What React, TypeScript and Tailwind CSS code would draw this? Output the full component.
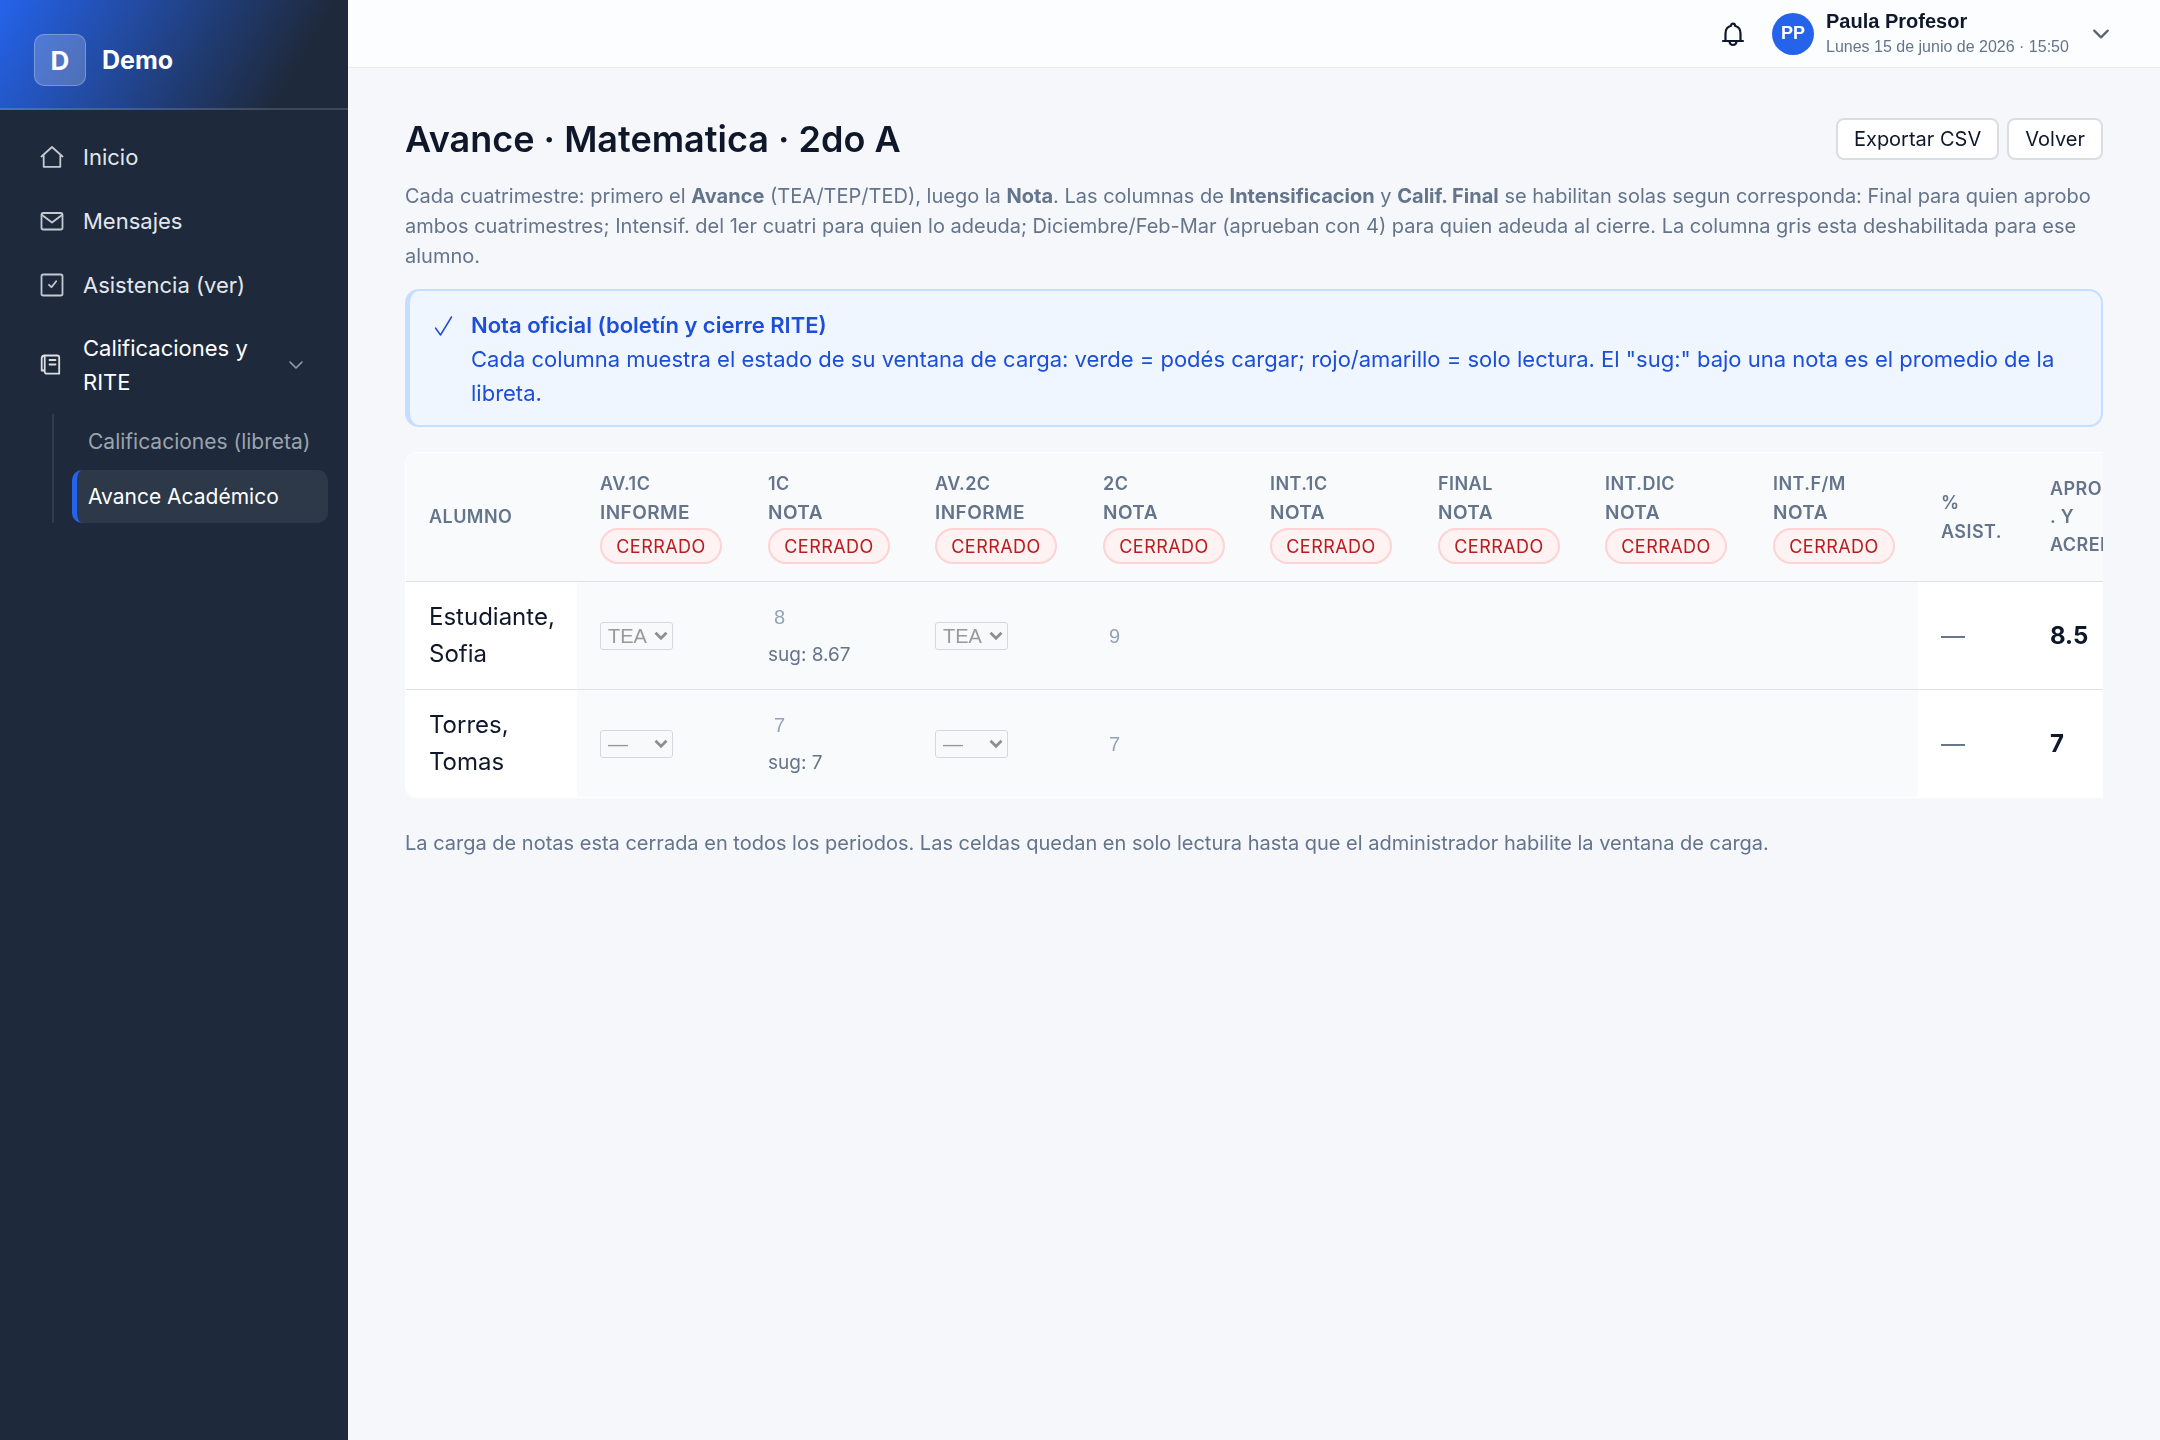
import type { ReactNode } from "react";

type Column = { top: string; bottom: string; width: string };

const gradeColumns: Column[] = [
  { top: "AV.1C", bottom: "INFORME", width: "w-[168px]" },
  { top: "1C", bottom: "NOTA", width: "w-[167px]" },
  { top: "AV.2C", bottom: "INFORME", width: "w-[168px]" },
  { top: "2C", bottom: "NOTA", width: "w-[167px]" },
  { top: "INT.1C", bottom: "NOTA", width: "w-[168px]" },
  { top: "FINAL", bottom: "NOTA", width: "w-[167px]" },
  { top: "INT.DIC", bottom: "NOTA", width: "w-[168px]" },
  { top: "INT.F/M", bottom: "NOTA", width: "w-[168px]" },
];

const students = [
  { last: "Estudiante,", first: "Sofia", av1: "TEA", n1: "8", sug: "8.67", av2: "TEA", n2: "9", final: "8.5" },
  { last: "Torres,", first: "Tomas", av1: "—", n1: "7", sug: "7", av2: "—", n2: "7", final: "7" },
];

function Icon({ children }: { children: ReactNode }) {
  return (
    <svg viewBox="0 0 28 28" className="size-7 shrink-0 opacity-85" fill="none" stroke="currentColor" strokeWidth="1.8" strokeLinecap="round" strokeLinejoin="round" aria-hidden="true">
      {children}
    </svg>
  );
}

function HomeIcon() {
  return (
    <Icon>
      <path d="M3.5 13.5 14 4l10.500 9.500M5.700 12v11.800h16.600V12" />
    </Icon>
  );
}

function MailIcon() {
  return (
    <Icon>
      <rect x="3.500" y="6" width="21" height="16.500" rx="1.800" />
      <path d="m4 8 10 7.500L24 8" />
    </Icon>
  );
}

function CheckBoxIcon() {
  return (
    <Icon>
      <rect x="3.500" y="3.500" width="21" height="21" rx="1.800" />
      <path d="m11 13.800 2.500 2.400 4.700-6" />
    </Icon>
  );
}

function BookIcon() {
  return (
    <Icon>
      <path d="M6.700 4.500h12.500a2 2 0 0 1 2 2v16.200H8.700a2 2 0 0 1-2-2zM6.700 4.500a3 3 0 0 0-3 2.500v12.500h2.500M11.500 9h6M11.500 13.500h6" />
    </Icon>
  );
}

function Chevron({ className }: { className: string }) {
  return (
    <svg viewBox="0 0 16 16" className={className} fill="none" stroke="currentColor" strokeLinecap="round" strokeLinejoin="round" aria-hidden="true">
      <path d="m2 5 6 6 6-6" />
    </svg>
  );
}

function NavLink({ icon, label }: { icon: ReactNode; label: string }) {
  return (
    <a href="#" className="flex h-16 items-center gap-[17px] pr-4 pl-[38px] text-[#e2e7ed]">
      {icon}
      <span>{label}</span>
    </a>
  );
}

function Sidebar() {
  return (
    <aside className="w-[348px] shrink-0 bg-[#1e293b] text-[22px]">
      <div className="flex h-[110px] items-center gap-4 border-b-2 border-white/15 bg-[linear-gradient(120deg,#2563eb_0%,#1e293b_82%)] bg-origin-border px-[34px] pt-3">
        <div className="flex size-[52px] items-center justify-center rounded-[10px] border border-white/25 bg-white/20 text-[26px] font-bold text-white">D</div>
        <span className="text-[25px] leading-[40px] font-bold text-white">Demo</span>
      </div>
      <nav className="pt-[15px]">
        <NavLink icon={<HomeIcon />} label="Inicio" />
        <NavLink icon={<MailIcon />} label="Mensajes" />
        <NavLink icon={<CheckBoxIcon />} label="Asistencia (ver)" />
        <button type="button" aria-expanded="true" className="flex h-24 w-full items-center gap-[17px] pr-11 pl-[38px] text-left leading-[34px] text-white">
          <BookIcon />
          <span className="flex-1">
            Calificaciones y<br />
            RITE
          </span>
          <Chevron className="size-4 stroke-[1.500] text-[#94a3b8]" />
        </button>
        <div className="mt-px mr-5 ml-[52px] border-l-2 border-[#303c4d] pl-[18px] text-[21px]">
          <a href="#" className="flex h-14 items-center pl-4 text-[#9ba3ae]">Calificaciones (libreta)</a>
          <a href="#" aria-current="page" className="flex h-[53px] items-center rounded-[10px] border-l-[5px] border-[#2563eb] bg-[#2d3848] pl-[11px] text-white">Avance Académico</a>
        </div>
      </nav>
    </aside>
  );
}

function TopBar() {
  return (
    <header className="flex h-[68px] items-center justify-end border-b border-[#e9ebef] bg-[#fcfdff] pr-[50px] font-['Liberation_Sans',Arial,sans-serif]">
      <button type="button" aria-label="Notificaciones" className="mr-[26px]">
        <svg viewBox="0 0 26 26" className="size-[26px]" fill="none" stroke="#0f172a" strokeWidth="2.200" strokeLinecap="round" strokeLinejoin="round">
          <path d="M3 20h20M5.500 20v-7.500c0-4 2.500-7 5.500-7.800a2 2 0 0 1 4 0c3 .8 5.500 3.800 5.500 7.800V20M9.500 20.500a3.500 3.500 0 0 0 7 0" />
        </svg>
      </button>
      <button type="button" className="flex items-center text-left">
        <span className="flex size-[42px] items-center justify-center rounded-full bg-[#2563eb] text-[18px] font-bold text-white">PP</span>
        <span className="ml-3 flex min-w-[251px] flex-col pt-px">
          <span className="text-[20px] leading-[25px] font-bold text-[#0f172a]">Paula Profesor</span>
          <span className="text-[16px] leading-[25px] text-[#64748b]">Lunes 15 de junio de 2026 · 15:50</span>
        </span>
        <Chevron className="ml-[15px] size-[18px] stroke-2 text-[#5b6472]" />
      </button>
    </header>
  );
}

function StateSelect({ value, label }: { value: string; label: string }) {
  return (
    <span className="relative block h-7 w-[73px]">
      <select disabled aria-label={label} defaultValue={value} className="block h-7 w-full appearance-none rounded-[3px] border border-[#d5d7db] bg-[#f8f9fb] pl-[7px] font-['Liberation_Sans',Arial,sans-serif] text-[20px] leading-[24px] text-[#999999] opacity-100">
        <option>{value}</option>
      </select>
      <svg viewBox="0 0 14 10" className="pointer-events-none absolute top-[9px] right-[5px] h-[10px] w-[14px]" fill="none" stroke="#8f8f8f" strokeWidth="2.800" aria-hidden="true">
        <path d="m1.500 1.800 5.500 5.500 5.500-5.500" />
      </svg>
    </span>
  );
}

function GradeInput({ value, label }: { value: string; label: string }) {
  return (
    <input
      disabled
      aria-label={label}
      defaultValue={value}
      className="block h-8 w-[84px] bg-transparent pl-[6px] font-['Liberation_Sans',Arial,sans-serif] text-[20px] text-[#94a3b8]"
    />
  );
}

function GradesTable() {
  return (
    <div className="mt-[25px] overflow-x-auto rounded-l-xl border-y border-l border-white bg-white [scrollbar-width:none]">
      <table className="w-[1760px] table-fixed border-collapse text-left">
        <colgroup>
          <col className="w-[171px]" />
          {gradeColumns.map((c) => (
            <col key={c.top} className={c.width} />
          ))}
          <col className="w-[108px]" />
          <col />
        </colgroup>
        <thead>
          <tr className="h-32 border-b border-[#dfe1e5] bg-[#f9fafc] text-[18px] leading-[29px] tracking-wide text-[#64748b]">
            <th scope="col" className="pl-[23px] font-semibold">ALUMNO</th>
            {gradeColumns.map((c) => (
              <th key={c.top} scope="col" className="pl-[23px] font-semibold">
                {c.top}
                <span className="block text-[19px]">{c.bottom}</span>
                <span className="mt-px flex h-9 w-[122px] items-center justify-center rounded-full border-2 border-[#fdd3d3] bg-[#fef2f2] font-normal text-[#b91c1c]">CERRADO</span>
              </th>
            ))}
            <th scope="col" className="pl-[23px] font-semibold">
              %<br />
              ASIST.
            </th>
            <th scope="col" className="pl-6 leading-[28px] font-semibold">
              APROB<br />. Y<br />
              ACRED
            </th>
          </tr>
        </thead>
        <tbody>
          {students.map((s) => (
            <tr key={s.last} className="h-[108px] border-[#dfe1e5] not-last:border-b [&>td]:pt-0.5">
              <th scope="row" className="pl-[23px] text-[24px] leading-[37px] font-normal text-[#0f172a]">
                {s.last}
                <br />
                {s.first}
              </th>
              <td className="bg-[#f9fafc] pl-[23px]">
                <StateSelect value={s.av1} label={`Avance 1C de ${s.first}`} />
              </td>
              <td className="bg-[#f9fafc] pl-[23px]">
                <GradeInput value={s.n1} label={`Nota 1C de ${s.first}`} />
                <span className="mt-1.5 block text-[19px] leading-8 text-[#64748b]">sug: {s.sug}</span>
              </td>
              <td className="bg-[#f9fafc] pl-[23px]">
                <StateSelect value={s.av2} label={`Avance 2C de ${s.first}`} />
              </td>
              <td className="bg-[#f9fafc] pl-[23px]">
                <GradeInput value={s.n2} label={`Nota 2C de ${s.first}`} />
              </td>
              <td className="bg-[#f9fafc]" />
              <td className="bg-[#f9fafc]" />
              <td className="bg-[#f9fafc]" />
              <td className="bg-[#f9fafc]" />
              <td className="pl-[23px] text-[24px] text-[#64748b]">—</td>
              <td className="pl-6 text-[24px] font-bold text-[#0f172a]">{s.final}</td>
            </tr>
          ))}
        </tbody>
      </table>
    </div>
  );
}

function ActionButton({ children }: { children: ReactNode }) {
  return (
    <button type="button" className="h-[42px] rounded-lg border-2 border-[#dadde2] bg-white px-4 text-[20px] text-[#0f172a]">
      {children}
    </button>
  );
}

export default function App() {
  return (
    <div className="flex min-h-screen bg-[#f5f7fb] font-['Inter',sans-serif]">
      <Sidebar />
      <div className="min-w-0 flex-1">
        <TopBar />
        <main className="px-[57px] pt-[50px]">
          <div className="flex items-center justify-between">
            <h1 className="text-[36px] leading-[42px] font-semibold text-[#0f172a]">Avance · Matematica · 2do A</h1>
            <div className="flex gap-2">
              <ActionButton>Exportar CSV</ActionButton>
              <ActionButton>Volver</ActionButton>
            </div>
          </div>
          <p className="mt-[21px] text-[20px] leading-[30px] text-[#64748b]">
            Cada cuatrimestre: primero el <b>Avance</b> (TEA/TEP/TED), luego la <b>Nota</b>. Las columnas de <b>Intensificacion</b> y <b>Calif. Final</b> se habilitan solas segun corresponda: Final para quien aprobo ambos cuatrimestres; Intensif. del 1er cuatri para quien lo adeuda; Diciembre/Feb-Mar (aprueban con 4) para quien adeuda al cierre. La columna gris esta deshabilitada para ese alumno.
          </p>
          <section className="mt-[18px] flex gap-[18px] rounded-[14px] border-2 border-l-[5px] border-[#c6defe] bg-[#eff6ff] px-6 pt-[17px] pb-[15px] text-[22px] leading-[34px] text-[#1d4ed8]">
            <svg viewBox="0 0 19 34" className="h-[34px] w-[19px] shrink-0" fill="none" stroke="currentColor" strokeWidth="1.500" strokeLinecap="round" strokeLinejoin="round" aria-hidden="true">
              <path d="m1.500 20 5 7L17.500 9" />
            </svg>
            <div>
              <h2 className="font-semibold">Nota oficial (boletín y cierre RITE)</h2>
              <p>Cada columna muestra el estado de su ventana de carga: verde = podés cargar; rojo/amarillo = solo lectura. El "sug:" bajo una nota es el promedio de la libreta.</p>
            </div>
          </section>
          <GradesTable />
          <p className="mt-[30px] text-[20px] leading-[30px] text-[#64748b]">La carga de notas esta cerrada en todos los periodos. Las celdas quedan en solo lectura hasta que el administrador habilite la ventana de carga.</p>
        </main>
      </div>
    </div>
  );
}
